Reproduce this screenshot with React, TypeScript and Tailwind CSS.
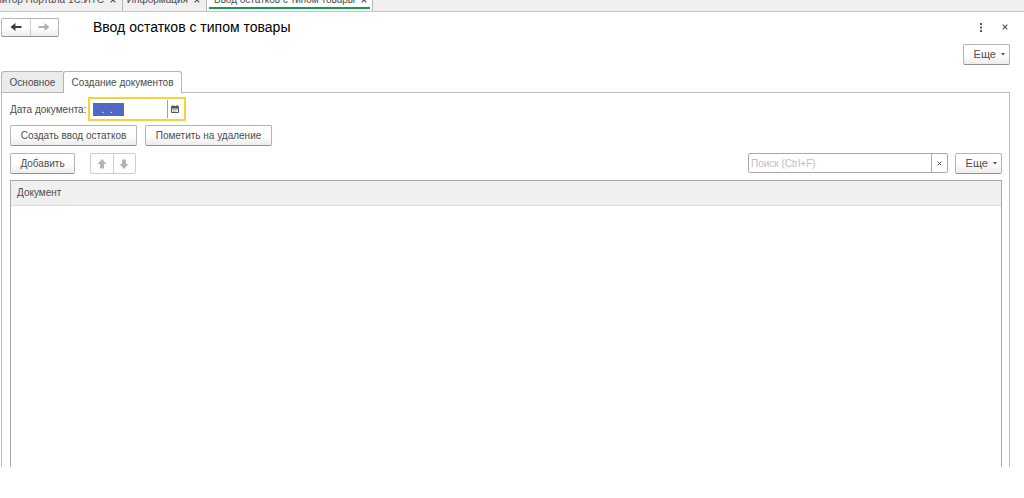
import React, { useState } from 'react';

const raised =
  'rounded-[2px] border border-[#b4b4b4] border-b-[#929292] bg-linear-to-b from-white from-50% to-[#ececec] text-[#4c4c4c] whitespace-nowrap';

const ArrowIcon = ({ className }: { className: string }) => (
  <svg className={className} width="12" height="10" viewBox="0 0 12 10">
    <path d="M11.5 5H3" fill="none" stroke="currentColor" strokeWidth="2" />
    <path d="M0.5 5L5.5 1v2.6L4 5l1.5 1.4V9z" fill="currentColor" />
  </svg>
);

const BlockArrowIcon = ({ className }: { className?: string }) => (
  <svg className={className} width="10" height="10" viewBox="0 0 10 10" fill="currentColor">
    <path d="M5 0L9.5 5H7v4.5H3V5H0.5z" />
  </svg>
);

const CrossIcon = ({ size }: { size: number }) => (
  <svg className="shrink-0" width={size} height={size} viewBox="0 0 6 6" fill="none" stroke="currentColor" strokeWidth="1.1">
    <path d="M0.7 0.7l4.6 4.6M5.3 0.7L0.7 5.3" />
  </svg>
);

const CalendarIcon = () => (
  <svg width="8" height="8" viewBox="0 0 8 8">
    <path d="M1 1h6a1 1 0 0 1 1 1v5a1 1 0 0 1-1 1H1a1 1 0 0 1-1-1V2a1 1 0 0 1 1-1z" fill="#555" />
    <path d="M1 3.5h6V7H1z" fill="#eee" />
    <path d="M2 0v2M6 0v2" stroke="#555" />
    <path d="M2 4.5h1M3.7 4.5h1M5.4 4.5h1M2 6h1M3.7 6h1" stroke="#777" strokeWidth="0.8" />
  </svg>
);

const MoreButton = () => (
  <button type="button" className={`${raised} flex h-[21px] w-[47px] items-center justify-end gap-[5px] pr-1 text-[11px]`}>
    Еще
    <svg width="4" height="3" viewBox="0 0 4 3" fill="#4c4c4c">
      <path d="M0 0h4L2 2.5z" />
    </svg>
  </button>
);

const WindowTabs = () => (
  <nav className="flex h-3 items-end overflow-hidden border-b border-[#c6c6c6] bg-[#f0f0f0] text-[10px] leading-[12px] text-[#4c4c4c]">
    <a href="#portal" className="flex w-[123px] shrink-0 items-center justify-end gap-[6px] border-r border-[#b8b8b8] pr-[6px] pb-[5px] whitespace-nowrap">
      Монитор Портала 1С:ИТС
      <CrossIcon size={6} />
    </a>
    <a href="#info" className="flex w-[84px] shrink-0 items-center justify-end gap-[6px] border-r border-[#b8b8b8] pr-[6px] pb-[5px] whitespace-nowrap">
      Информация
      <CrossIcon size={6} />
    </a>
    <a href="#stock" className="w-[166px] shrink-0 border-r border-[#b8b8b8] bg-white px-[2px] pb-[2px] whitespace-nowrap">
      <span className="flex items-center justify-end gap-[6px] border-b-2 border-[#0d9f4f] pr-[3px] pb-px">
        Ввод остатков с типом товары
        <CrossIcon size={6} />
      </span>
    </a>
  </nav>
);

const App = () => {
  const [date, setDate] = useState('  .  .    ');
  const [search, setSearch] = useState('');

  return (
    <div className="flex min-h-screen flex-col bg-white pb-[31px] font-['Liberation_Sans',Arial,sans-serif] text-[10px] text-[#4c4c4c]">
      <WindowTabs />

      <header className="flex h-[30px] items-center pr-4 pl-[1px]">
        <div className="flex h-[19px] w-[58px] rounded-[2px] border border-[#b4b4b4] border-b-[#929292] bg-linear-to-b from-white from-50% to-[#ececec]">
          <button type="button" aria-label="Назад" className="flex flex-1 items-center justify-center border-r border-[#cfcfcf]">
            <ArrowIcon className="text-[#3c3c3c]" />
          </button>
          <button type="button" aria-label="Вперед" className="flex flex-1 items-center justify-center">
            <ArrowIcon className="rotate-180 text-[#b0b0b0]" />
          </button>
        </div>
        <h1 className="ml-[34px] text-[14px] text-black">Ввод остатков с типом товары</h1>
        <div className="ml-auto flex items-center gap-[19px]">
          <button type="button" aria-label="Меню">
            <svg width="4" height="9" viewBox="0 0 4 9" fill="#555">
              <path d="M1 0h2v2H1zM1 3.5h2v2H1zM1 7h2v2H1z" />
            </svg>
          </button>
          <button type="button" aria-label="Закрыть">
            <CrossIcon size={6} />
          </button>
        </div>
      </header>

      <div className="mt-[2px] flex justify-end pr-[14px]">
        <MoreButton />
      </div>

      <div className="mt-[6px] flex flex-1 flex-col pr-[14px] pl-px">
        <div role="tablist" className="z-10 -mb-px flex h-[22px]">
          <button type="button" role="tab" aria-selected="false" className="w-[62px] rounded-tl-[3px] border border-r-0 border-[#b4b4b4] bg-[#ebebeb]">
            Основное
          </button>
          <button type="button" role="tab" aria-selected="true" className="w-[119px] rounded-t-[3px] border border-b-0 border-[#b4b4b4] bg-white whitespace-nowrap">
            Создание документов
          </button>
        </div>

        <main className="flex flex-1 flex-col border border-b-0 border-[#c0c0c0] pt-1 pr-[7px] pl-2">
          <div className="flex items-center">
            <label htmlFor="date" className="w-[78px] whitespace-nowrap">
              Дата документа:
            </label>
            <div className="flex h-6 w-[98px] items-center border-2 border-[#fbd03b] pl-[3px]">
              <input
                id="date"
                value={date}
                onChange={(e) => setDate(e.target.value)}
                className="h-[13px] w-[31px] bg-[#5069c3] px-[3px] text-[10px] text-white outline-none"
              />
              <button type="button" aria-label="Выбрать дату" className="ml-auto flex h-[18px] w-[17px] items-center border-l border-[#a0a0a0] pl-[3px]">
                <CalendarIcon />
              </button>
            </div>
          </div>

          <div className="mt-1 flex gap-2">
            <button type="button" className={`${raised} h-[21px] w-[127px]`}>
              Создать ввод остатков
            </button>
            <button type="button" className={`${raised} h-[21px] w-[127px]`}>
              Пометить на удаление
            </button>
          </div>

          <div className="mt-[7px] flex">
            <button type="button" className={`${raised} h-[21px] w-[65px]`}>
              Добавить
            </button>
            <div className="ml-[15px] flex h-[21px] w-[46px] rounded-[2px] border border-[#cdcdcd] text-[#a9b4bb]">
              <button type="button" aria-label="Вверх" className="flex flex-1 items-center justify-center border-r border-[#cdcdcd]">
                <BlockArrowIcon />
              </button>
              <button type="button" aria-label="Вниз" className="flex flex-1 items-center justify-center">
                <BlockArrowIcon className="rotate-180" />
              </button>
            </div>
            <div className="mr-[7px] ml-auto flex h-5 w-[200px] rounded-[2px] border border-[#a8a8a8]">
              <input
                aria-label="Поиск"
                placeholder="Поиск (Ctrl+F)"
                value={search}
                onChange={(e) => setSearch(e.target.value)}
                className="min-w-0 flex-1 px-[2px] text-[10px] outline-none placeholder:text-[#bdbdbd]"
              />
              <button type="button" aria-label="Очистить" className="flex w-4 items-center justify-center border-l border-[#a8a8a8]">
                <CrossIcon size={5} />
              </button>
            </div>
            <MoreButton />
          </div>

          <div className="mt-[6px] flex-1 border border-b-0 border-[#a8a8a8]">
            <table className="w-full border-collapse">
              <thead>
                <tr>
                  <th className="h-6 border-b border-[#dcdcdc] bg-[#f0f0f0] px-[6px] text-left font-normal">Документ</th>
                </tr>
              </thead>
            </table>
          </div>
        </main>
      </div>
    </div>
  );
};

export default App;
